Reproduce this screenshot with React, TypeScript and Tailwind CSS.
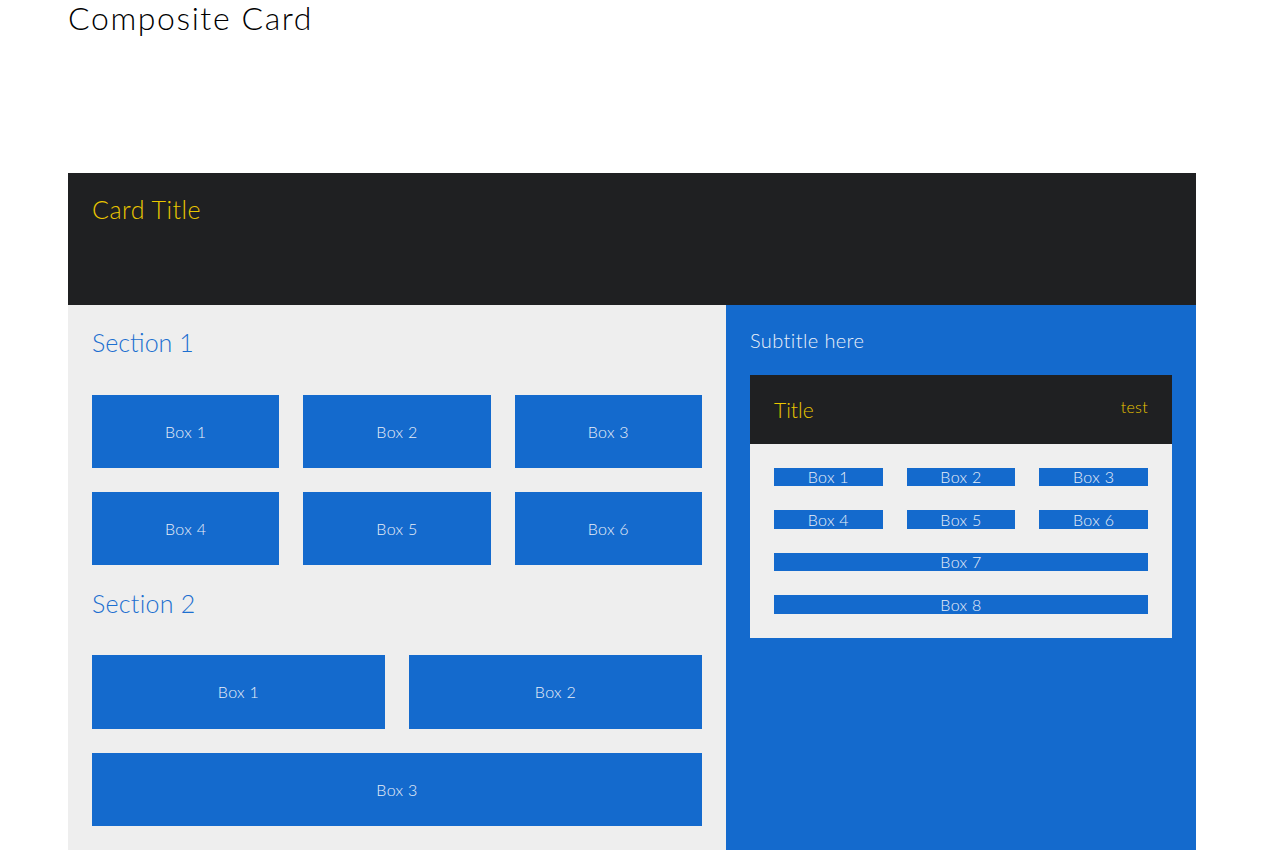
import React from "react";

const font = { fontFamily: "Lato, 'Open Sans', sans-serif" };

function Box({ label, className = "" }: { label: string; className?: string }) {
  return (
    <div className={`bg-[#146acd] text-[#e8eef8] flex items-center justify-center font-light tracking-[0.02em] ${className}`}>
      {label}
    </div>
  );
}

export default function App() {
  return (
    <div style={font} className="bg-white min-h-screen px-[68px] font-light">
      <h1 className="text-[32px] leading-[36px] tracking-[0.05em] text-black font-light h-[173px]">Composite Card</h1>
      <div className="bg-[#1f2022] h-[132px] px-6 pt-[20px]">
        <div className="text-[25px] leading-[32px] tracking-[0.02em] text-[#eac600] font-light">Card Title</div>
      </div>
      <div className="flex">
        <div className="w-[658px] bg-[#eeeeee] p-6 pb-6">
          <div className="text-[25px] leading-[26px] text-[#1c6fd0] h-[66px]">Section 1</div>
          <div className="grid grid-cols-3 gap-6">
            {[1, 2, 3, 4, 5, 6].map((n) => (
              <Box key={n} label={`Box ${n}`} className="h-[73px] text-[16px]" />
            ))}
          </div>
          <div className="text-[25px] leading-[32px] text-[#1c6fd0] tracking-[0.01em] pt-[22px] h-[90px]">Section 2</div>
          <div className="grid grid-cols-2 gap-6">
            <Box label="Box 1" className="h-[74px] text-[16px]" />
            <Box label="Box 2" className="h-[74px] text-[16px]" />
            <Box label="Box 3" className="h-[73px] text-[16px] col-span-2" />
          </div>
        </div>
        <div className="flex-1 bg-[#146acd] p-6">
          <div className="text-[20px] leading-[20px] tracking-[0.02em] text-[#eaf0f9] h-[46px] pt-[1px]">Subtitle here</div>
          <div className="bg-[#1f2022] h-[69px] px-6 flex items-center justify-between">
            <span className="text-[21px] text-[#eac600]">Title</span>
            <span className="text-[16px] text-[#eac600] tracking-[0.02em] -mt-[5px]">test</span>
          </div>
          <div className="bg-[#efefef] p-6 flex flex-col gap-6">
            <div className="grid grid-cols-3 gap-6">
              {[1, 2, 3].map((n) => (
                <Box key={n} label={`Box ${n}`} className="h-[18px] text-[16px] leading-[18px]" />
              ))}
            </div>
            <div className="grid grid-cols-3 gap-6">
              {[4, 5, 6].map((n) => (
                <Box key={n} label={`Box ${n}`} className="h-[19px] text-[16px] leading-[18px]" />
              ))}
            </div>
            <Box label="Box 7" className="h-[18px] text-[16px] leading-[18px]" />
            <Box label="Box 8" className="h-[19px] text-[16px] leading-[18px]" />
          </div>
        </div>
      </div>
    </div>
  );
}
